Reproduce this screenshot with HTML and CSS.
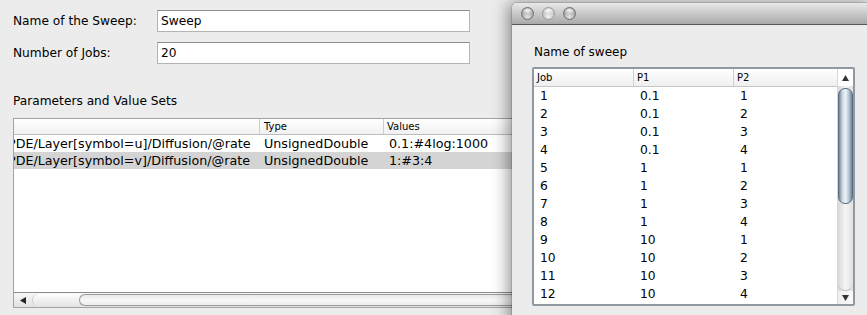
FILE: index.html
```html
<!DOCTYPE html>
<html>
<head>
<meta charset="utf-8">
<link rel="stylesheet" href="styles.css">
</head>
<body>
<div class="main">
  <div class="form">
    <label class="lbl">Name of the Sweep:</label>
    <div class="field">Sweep</div>
    <label class="lbl">Number of Jobs:</label>
    <div class="field">20</div>
  </div>
  <div class="section">Parameters and Value Sets</div>
  <div class="ptable">
    <div class="pview">
      <div class="prow phead">
        <div class="pc c1"><span class="scrolled">e</span></div>
        <div class="pc c2">Type</div>
        <div class="pc c3">Values</div>
      </div>
      <div class="prow">
        <div class="pc c1"><span class="scrolled">PDE/Layer[symbol=u]/Diffusion/@rate</span></div>
        <div class="pc c2">UnsignedDouble</div>
        <div class="pc c3">0.1:#4log:1000</div>
      </div>
      <div class="prow sel">
        <div class="pc c1"><span class="scrolled">PDE/Layer[symbol=v]/Diffusion/@rate</span></div>
        <div class="pc c2">UnsignedDouble</div>
        <div class="pc c3">1:#3:4</div>
      </div>
    </div>
    <div class="hscroll">
      <div class="harrow"><svg width="6" height="7" viewBox="0 0 6 7"><path d="M0 3.5 L6 0 L6 7 Z" fill="#222"/></svg></div>
      <div class="hthumb"></div>
      <div class="htrack"></div>
    </div>
  </div>
</div>

<div class="dialog">
  <div class="titlebar">
    <span class="light"></span><span class="light dim"></span><span class="light"></span>
  </div>
  <div class="dcontent">
    <div class="dlabel">Name of sweep</div>
    <div class="jtable">
      <div class="jview">
        <div class="jrow jhead"><div class="jc">Job</div><div class="jc">P1</div><div class="jc last">P2</div></div>
        <div class="jrow"><div class="jc">1</div><div class="jc">0.1</div><div class="jc last">1</div></div>
        <div class="jrow"><div class="jc">2</div><div class="jc">0.1</div><div class="jc last">2</div></div>
        <div class="jrow"><div class="jc">3</div><div class="jc">0.1</div><div class="jc last">3</div></div>
        <div class="jrow"><div class="jc">4</div><div class="jc">0.1</div><div class="jc last">4</div></div>
        <div class="jrow"><div class="jc">5</div><div class="jc">1</div><div class="jc last">1</div></div>
        <div class="jrow"><div class="jc">6</div><div class="jc">1</div><div class="jc last">2</div></div>
        <div class="jrow"><div class="jc">7</div><div class="jc">1</div><div class="jc last">3</div></div>
        <div class="jrow"><div class="jc">8</div><div class="jc">1</div><div class="jc last">4</div></div>
        <div class="jrow"><div class="jc">9</div><div class="jc">10</div><div class="jc last">1</div></div>
        <div class="jrow"><div class="jc">10</div><div class="jc">10</div><div class="jc last">2</div></div>
        <div class="jrow"><div class="jc">11</div><div class="jc">10</div><div class="jc last">3</div></div>
        <div class="jrow"><div class="jc">12</div><div class="jc">10</div><div class="jc last">4</div></div>
      </div>
      <div class="vscroll">
        <div class="varrow up"><svg width="7" height="6" viewBox="0 0 7 6"><path d="M3.5 0 L7 6 L0 6 Z" fill="#333"/></svg></div>
        <div class="vthumb"></div>
        <div class="vtrack"></div>
        <div class="varrow down"><svg width="7" height="6" viewBox="0 0 7 6"><path d="M0 0 L7 0 L3.5 6 Z" fill="#333"/></svg></div>
      </div>
    </div>
  </div>
</div>
</body>
</html>
```

FILE: styles.css
```css
html, body {
  margin: 0;
  padding: 0;
}
body {
  width: 867px;
  height: 315px;
  overflow: hidden;
  background: #ececec;
  font-family: "DejaVu Sans", "Liberation Sans", sans-serif;
  font-size: 12px;
  color: #000;
  position: relative;
}

.main {
  padding: 10px 0 0 13px;
}

.form {
  display: grid;
  grid-template-columns: 144px 313px;
  grid-auto-rows: 22px;
  row-gap: 10px;
  align-items: center;
  font-size: 12.2px;
}
.lbl {
  line-height: 14px;
}
.field {
  box-sizing: border-box;
  height: 22px;
  background: #fff;
  border: 1px solid #b4b4b4;
  border-top-color: #8e8e8e;
  padding: 0 0 0 3px;
  line-height: 20px;
}

.section {
  margin-top: 30px;
  line-height: 14px;
  font-size: 12.2px;
}

.ptable {
  margin-top: 10px;
  width: 620px;
  height: 190px;
  box-sizing: border-box;
  border: 1px solid #a3a3a3;
  background: #fff;
  display: flex;
  flex-direction: column;
  overflow: hidden;
}
.pview {
  flex: 1;
}
.prow {
  display: flex;
  height: 17px;
  line-height: 17px;
  white-space: nowrap;
  font-size: 12.7px;
}
.phead {
  height: 15px;
  line-height: 15px;
  font-size: 10px;
  border-bottom: 1px solid #bdbdbd;
  background: linear-gradient(#ffffff, #f1f1f1);
}
.phead .pc {
  border-right: 1px solid #cdcdcd;
}
.sel {
  background: #d4d4d4;
}
.pc {
  overflow: hidden;
  box-sizing: border-box;
  padding-left: 4px;
}
.pc.c1 {
  width: 246px;
  padding-left: 0;
}
.pc.c2 {
  width: 124px;
}
.pc.c3 {
  flex: 1;
}
.prow .c2 { padding-left: 4px; }
.prow .c3 { padding-left: 5px; }
.phead .c2 { padding-left: 4px; }
.phead .c3 { padding-left: 3px; }
.scrolled {
  display: inline-block;
  margin-left: -6px;
}
.phead .scrolled {
  margin-left: -6px;
  color: #555;
}

.hscroll {
  height: 14px;
  border-top: 1px solid #8c8c8c;
  background: linear-gradient(#f7f7f7, #e2e2e2);
  display: flex;
  align-items: center;
}
.harrow {
  width: 14px;
  display: flex;
  justify-content: center;
  padding-left: 2px;
}
.hthumb {
  width: 46px;
  height: 12px;
  margin-left: 2px;
  border-radius: 6px 0 0 6px;
  background: linear-gradient(#ffffff, #f0f0f0 50%, #e6e6e6);
  border-left: 1px solid #cfcfcf;
}
.htrack {
  flex: 1;
  height: 12px;
  box-sizing: border-box;
  border: 1px solid #9a9a9a;
  border-right: none;
  border-radius: 6px 0 0 6px;
  background: linear-gradient(#e9e9e9, #f7f7f7 50%, #ececec);
}

/* dialog window */
.dialog {
  position: absolute;
  left: 512px;
  top: 3px;
  width: 362px;
  height: 320px;
  background: #ececec;
  border-radius: 5px 5px 0 0;
  box-shadow: -4px 0 16px rgba(0, 0, 0, 0.42), 0 0 0 1px rgba(0, 0, 0, 0.12);
}
.titlebar {
  height: 21px;
  border-radius: 5px 5px 0 0;
  background: linear-gradient(#e9e9e9, #c9c9c9 50%, #a9a9a9);
  border-bottom: 1px solid #575757;
  display: flex;
  align-items: center;
  gap: 8px;
  padding-left: 9px;
}
.light {
  width: 13px;
  height: 13px;
  box-sizing: border-box;
  border-radius: 50%;
  border: 1px solid #6f6f6f;
  background:
    radial-gradient(ellipse 60% 35% at 50% 22%, rgba(255,255,255,0.95), rgba(255,255,255,0) 100%),
    radial-gradient(circle at 50% 80%, #e6e6e6, #a3a3a3 60%, #7d7d7d);
}
.light.dim {
  border-color: #9a9a9a;
  background:
    radial-gradient(ellipse 60% 35% at 50% 22%, rgba(255,255,255,0.95), rgba(255,255,255,0) 100%),
    radial-gradient(circle at 50% 80%, #f0f0f0, #c4c4c4 60%, #acacac);
}

.dcontent {
  padding: 20px 12px 0 20px;
}
.dlabel {
  line-height: 14px;
  margin-left: 2px;
}
.jtable {
  margin-top: 8px;
  width: 323px;
  height: 239px;
  box-sizing: border-box;
  border: 2px solid #8f99a2;
  border-radius: 2px;
  background: #fff;
  display: flex;
  overflow: hidden;
}
.jview {
  flex: 1;
}
.jrow {
  display: flex;
  height: 18px;
  line-height: 18px;
  font-size: 12.3px;
}
.jhead {
  font-size: 10px;
  background: linear-gradient(#ffffff, #efefef);
  border-bottom: 1px solid #c6c6c6;
  height: 17px;
  line-height: 17px;
}
.jc {
  width: 100px;
  box-sizing: border-box;
  padding-left: 6px;
}
.jc.last {
  flex: 1;
}
.jhead .jc {
  padding-left: 3px;
  border-right: 1px solid #cfcfcf;
}
.jhead .jc.last {
  border-right: none;
}
.vscroll {
  width: 15px;
  display: flex;
  flex-direction: column;
  border-left: 1px solid #d8d8d8;
  background: linear-gradient(90deg, #d9d9d9, #f4f4f4 50%, #e0e0e0);
}
.varrow {
  height: 17px;
  display: flex;
  justify-content: center;
  align-items: center;
  background: #fff;
}
.varrow.down {
  height: 13px;
  background: linear-gradient(90deg, #efefef, #fafafa);
}
.vthumb {
  height: 116px;
  margin: 2px 0 0 0;
  border-radius: 7px;
  border: 1px solid #5b6d7e;
  box-sizing: border-box;
  background: linear-gradient(90deg, #6e8295, #c9d5e0 25%, #eef3f7 50%, #b8c7d5 75%, #6e8295);
}
.vtrack {
  flex: 1;
  border-radius: 0 0 7px 7px;
  border-bottom: 1px solid #bdbdbd;
}
```
